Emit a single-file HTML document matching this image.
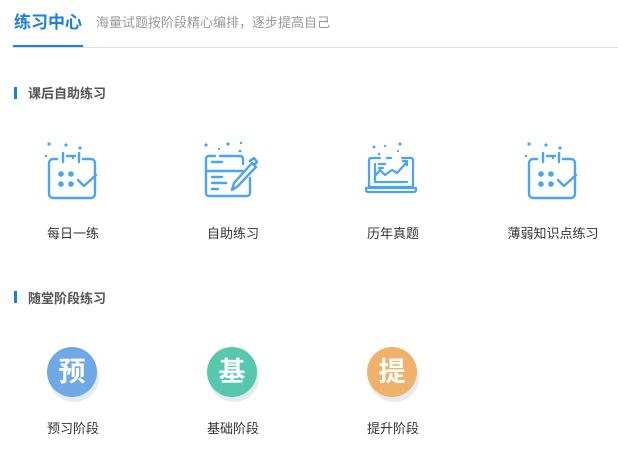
<!DOCTYPE html>
<html><head><meta charset="utf-8"><style>
*{margin:0;padding:0;box-sizing:border-box}
body{width:618px;height:450px;background:#fff;font-family:"Liberation Sans","Noto Sans CJK SC",sans-serif;position:relative;overflow:hidden}
.a{position:absolute;white-space:nowrap}
.t{left:14px;top:8px;font-size:17px;font-weight:bold;color:#1a7fe0}
.sub{left:96px;top:12px;font-size:13px;color:#999}
.ul{left:13px;top:45px;width:70px;height:2px;background:#1a7fe0}
.gl{left:13px;top:47px;width:605px;height:1px;background:#ddd}
.bar{width:3px;height:12px;background:#1a7fe0}
.h{font-size:13px;font-weight:bold;color:#555}
.lab{font-size:13px;color:#333;transform:translateX(-50%)}
.c{width:50px;height:50px;border-radius:50%;color:#fff;font-size:27px;font-weight:bold;text-align:center;line-height:50px;box-shadow:2px 5px 0 #e6ebf2}
svg{position:absolute}
</style></head><body>
<div class="a t">练习中心</div>
<div class="a sub">海量试题按阶段精心编排，逐步提高自己</div>
<div class="a gl"></div><div class="a ul"></div>
<div class="a bar" style="left:14px;top:87px"></div>
<div class="a h" style="left:28px;top:83px">课后自助练习</div>

<svg style="left:45px;top:140px" width="60" height="60" viewBox="0 0 60 60" fill="none" stroke="#4aa3f5" stroke-width="2.4" stroke-linecap="round" stroke-linejoin="round">
<path d="M12 19H8a4 4 0 0 0-4 4v31a4 4 0 0 0 4 4h38a4 4 0 0 0 4-4V23a4 4 0 0 0-4-4h-8"/>
<path d="M18 13v9M34 13v9M22 16h8"/><path d="M33 40l6 6 12-11"/>
<g fill="#4aa3f5" stroke="none"><circle cx="16" cy="34" r="2.8"/><circle cx="26" cy="34" r="2.8"/><circle cx="16" cy="44" r="2.8"/><circle cx="26" cy="44" r="2.8"/><circle cx="4" cy="4" r="1.6"/><circle cx="21" cy="5" r="1.6"/><circle cx="35" cy="8" r="1.6"/><circle cx="1" cy="16" r="1.2"/><circle cx="28" cy="18" r="1.2"/></g>
</svg>
<div class="a lab" style="left:73px;top:223px">每日一练</div>

<svg style="left:203px;top:140px" width="60" height="60" viewBox="0 0 60 60" fill="none" stroke="#4aa3f5" stroke-width="2.4" stroke-linecap="round" stroke-linejoin="round">
<path d="M12 16H6a3 3 0 0 0-3 3v34a3 3 0 0 0 3 3h38a3 3 0 0 0 3-3V38"/><path d="M17 16h20a3 3 0 0 1 3 3v5"/>
<path d="M3 31h36M9 22h10M9 37h10M9 43h14M9 49h6"/>
<path d="M29 50l2-7 18-20 4 4-18 19z"/><path d="M47 21l4-3 3 4-3 3"/>
<g fill="#4aa3f5" stroke="none"><circle cx="3" cy="5" r="1.6"/><circle cx="25" cy="4" r="1.6"/><circle cx="38" cy="3" r="1.2"/><circle cx="16" cy="9" r="1.1"/><circle cx="37" cy="11" r="1.4"/></g>
</svg>
<div class="a lab" style="left:233px;top:223px">自助练习</div>

<svg style="left:365px;top:140px" width="60" height="60" viewBox="0 0 60 60" fill="none" stroke="#4aa3f5" stroke-width="2.2" stroke-linecap="round" stroke-linejoin="round">
<path d="M15 18H6a2 2 0 0 0-2 2v27h44V20a2 2 0 0 0-2-2h-9M22 18h4"/>
<path d="M1 48h50v2a2 2 0 0 1-2 2H3a2 2 0 0 1-2-2z"/>
<path d="M10 24v18h32M14 24h6M14 28h4M10 36l5-6 5 5 7-5 5 3 9-10M38 21h4v4"/>
<g fill="#4aa3f5" stroke="none"><circle cx="9" cy="7" r="1.4"/><circle cx="20" cy="6" r="1.1"/><circle cx="35" cy="4" r="1.6"/><circle cx="14" cy="14" r="1.3"/><circle cx="33" cy="11" r="1.1"/></g>
</svg>
<div class="a lab" style="left:393px;top:223px">历年真题</div>

<svg style="left:525px;top:140px" width="60" height="60" viewBox="0 0 60 60" fill="none" stroke="#4aa3f5" stroke-width="2.4" stroke-linecap="round" stroke-linejoin="round">
<path d="M12 19H8a4 4 0 0 0-4 4v31a4 4 0 0 0 4 4h38a4 4 0 0 0 4-4V23a4 4 0 0 0-4-4h-8"/>
<path d="M18 13v9M34 13v9M22 16h8"/><path d="M33 40l6 6 12-11"/>
<g fill="#4aa3f5" stroke="none"><circle cx="16" cy="34" r="2.8"/><circle cx="26" cy="34" r="2.8"/><circle cx="16" cy="44" r="2.8"/><circle cx="26" cy="44" r="2.8"/><circle cx="4" cy="4" r="1.6"/><circle cx="21" cy="5" r="1.6"/><circle cx="35" cy="8" r="1.6"/><circle cx="1" cy="16" r="1.2"/><circle cx="28" cy="18" r="1.2"/></g>
</svg>
<div class="a lab" style="left:553px;top:223px">薄弱知识点练习</div>

<div class="a bar" style="left:14px;top:291px"></div>
<div class="a h" style="left:28px;top:288px">随堂阶段练习</div>

<div class="a c" style="left:47px;top:347px;background:#6fa8e6">预</div>
<div class="a lab" style="left:73px;top:418px">预习阶段</div>
<div class="a c" style="left:207px;top:347px;background:#57c7ad">基</div>
<div class="a lab" style="left:233px;top:418px">基础阶段</div>
<div class="a c" style="left:367px;top:347px;background:#f0b26a">提</div>
<div class="a lab" style="left:393px;top:418px">提升阶段</div>
</body></html>
